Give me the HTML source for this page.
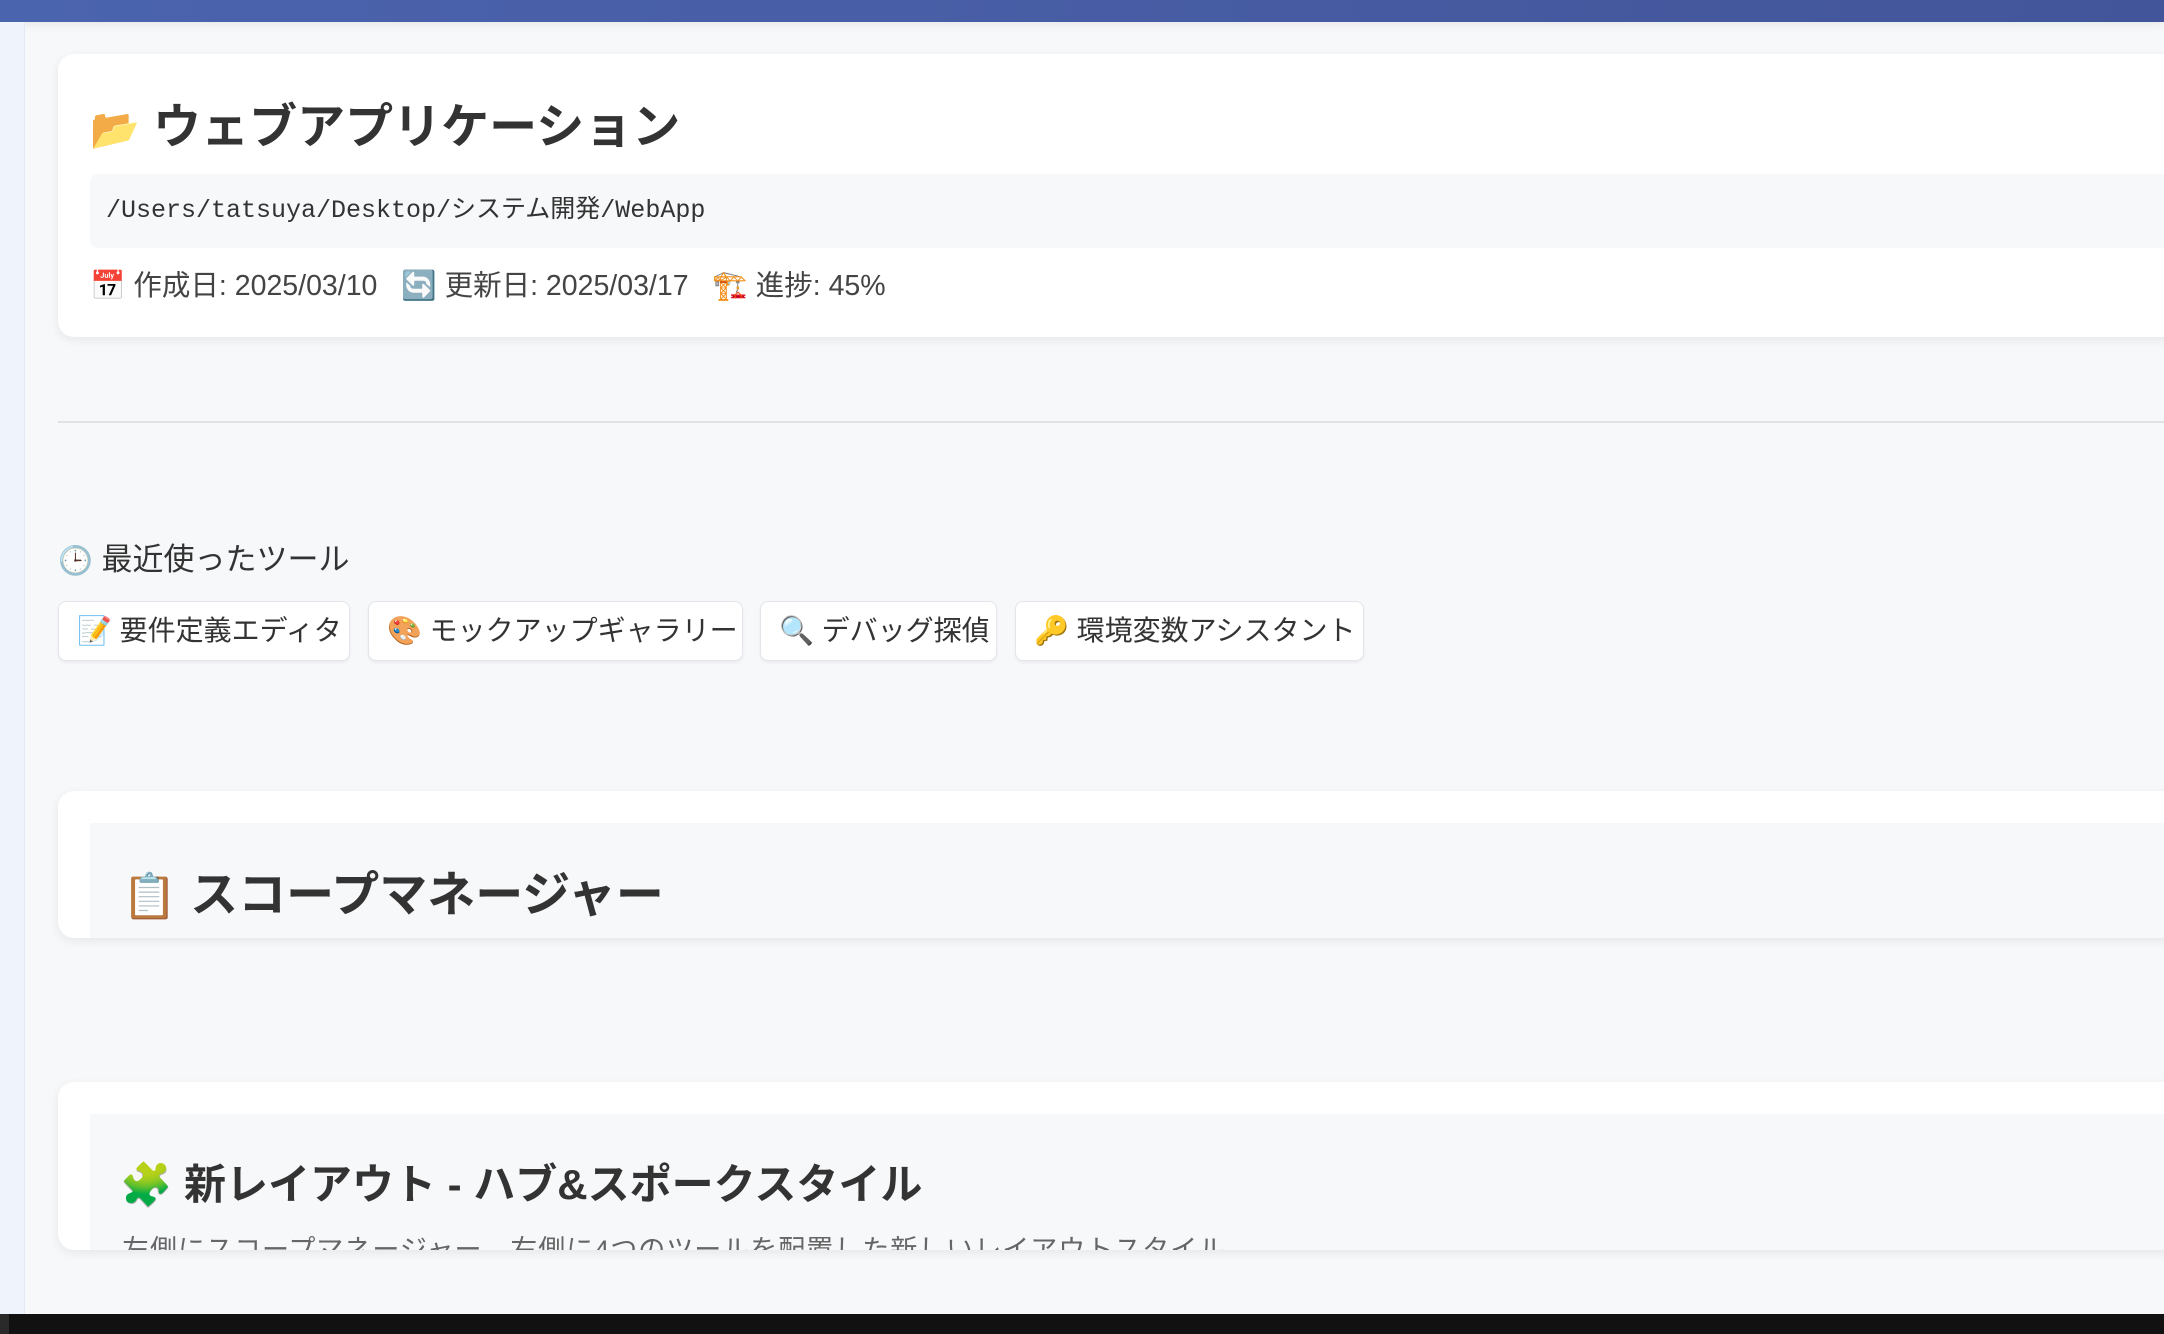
<!DOCTYPE html>
<html><head><meta charset="utf-8"><style>
*{margin:0;padding:0;box-sizing:border-box}
body{width:2164px;height:1334px;overflow:hidden;background:#f7f8fa;font-family:"Liberation Sans","Noto Sans CJK JP",sans-serif;color:#333;position:relative}
.top{position:absolute;left:0;top:0;width:2164px;height:22px;background:linear-gradient(90deg,#4b64ae,#43559a);box-shadow:0 2px 10px rgba(0,0,0,.08)}
.side{position:absolute;left:0;top:22px;width:25px;height:1292px;background:#eff3fc;border-right:1px solid #e2e8f5}
.bot{position:absolute;left:0;top:1314px;width:2164px;height:20px;background:#111}
.bot i{position:absolute;left:0;top:0;width:9px;height:20px;background:#2a2a2a}
.card{position:absolute;left:58px;width:2140px;background:#fff;border-radius:16px;box-shadow:0 3px 10px rgba(0,0,0,.07);overflow:hidden}
.abs{position:absolute;white-space:nowrap}
.ic{font-family:"Noto Color Emoji","DejaVu Sans",sans-serif}
.chip{position:absolute;top:601px;height:60px;background:#fff;border:1px solid #e3e5ea;border-radius:8px;box-shadow:0 2px 3px rgba(0,0,0,.05);font-size:28px;line-height:58px;padding-left:18px;white-space:nowrap;color:#333}
.inner{position:absolute;left:32px;width:2140px;background:#f7f8fa}
</style></head><body>
<div class="top"></div>
<div class="side"></div>

<div class="card" style="top:54px;height:283px">
  <div class="abs" style="left:32px;top:40px;font-size:48px;font-weight:bold;color:#333;line-height:68px"><span class="ic" style="font-size:40px">📂</span> ウェブアプリケーション</div>
  <div class="abs" style="left:32px;top:120px;width:2120px;height:74px;background:#f7f8fa;border-radius:8px;font-family:'Liberation Mono','Noto Sans CJK JP',monospace;font-size:25px;line-height:74px;padding-left:16px;color:#333">/Users/tatsuya/Desktop/システム開発/WebApp</div>
  <div class="abs" style="left:32px;top:212px;font-size:28.5px;line-height:40px;color:#444"><span class="ic">📅</span> 作成日: 2025/03/10 &nbsp;&nbsp;<span class="ic">🔄</span> 更新日: 2025/03/17 &nbsp;&nbsp;<span class="ic">🏗</span> 進捗: 45%</div>
</div>

<div class="abs" style="left:58px;top:421px;width:2106px;height:2px;background:#e0e2e6"></div>

<div class="abs" style="left:58px;top:538px;font-size:31px;line-height:44px;color:#333"><span class="ic" style="font-size:28px">🕒</span> 最近使ったツール</div>

<div class="chip" style="left:58px;width:292px"><span class="ic">📝</span> 要件定義エディタ</div>
<div class="chip" style="left:368px;width:375px"><span class="ic">🎨</span> モックアップギャラリー</div>
<div class="chip" style="left:760px;width:237px"><span class="ic">🔍</span> デバッグ探偵</div>
<div class="chip" style="left:1015px;width:349px"><span class="ic">🔑</span> 環境変数アシスタント</div>

<div class="card" style="top:791px;height:147px">
  <div class="inner" style="top:32px;height:200px"></div>
  <div class="abs" style="left:64px;top:72px;font-size:48px;font-weight:bold;line-height:66px;color:#333"><span class="ic" style="font-size:44px">📋</span> スコープマネージャー</div>
</div>

<div class="card" style="top:1082px;height:168px">
  <div class="inner" style="top:32px;height:200px"></div>
  <div class="abs" style="left:62px;top:70px;font-size:42px;font-weight:bold;line-height:66px;color:#333"><span class="ic" style="font-size:42px">🧩</span> 新レイアウト - ハブ&amp;スポークスタイル</div>
  <div class="abs" style="left:64px;top:150px;font-size:27px;letter-spacing:1px;line-height:36px;color:#666">左側にスコープマネージャー、右側に4つのツールを配置した新しいレイアウトスタイル</div>
</div>

<div class="bot"><i></i></div>
</body></html>
